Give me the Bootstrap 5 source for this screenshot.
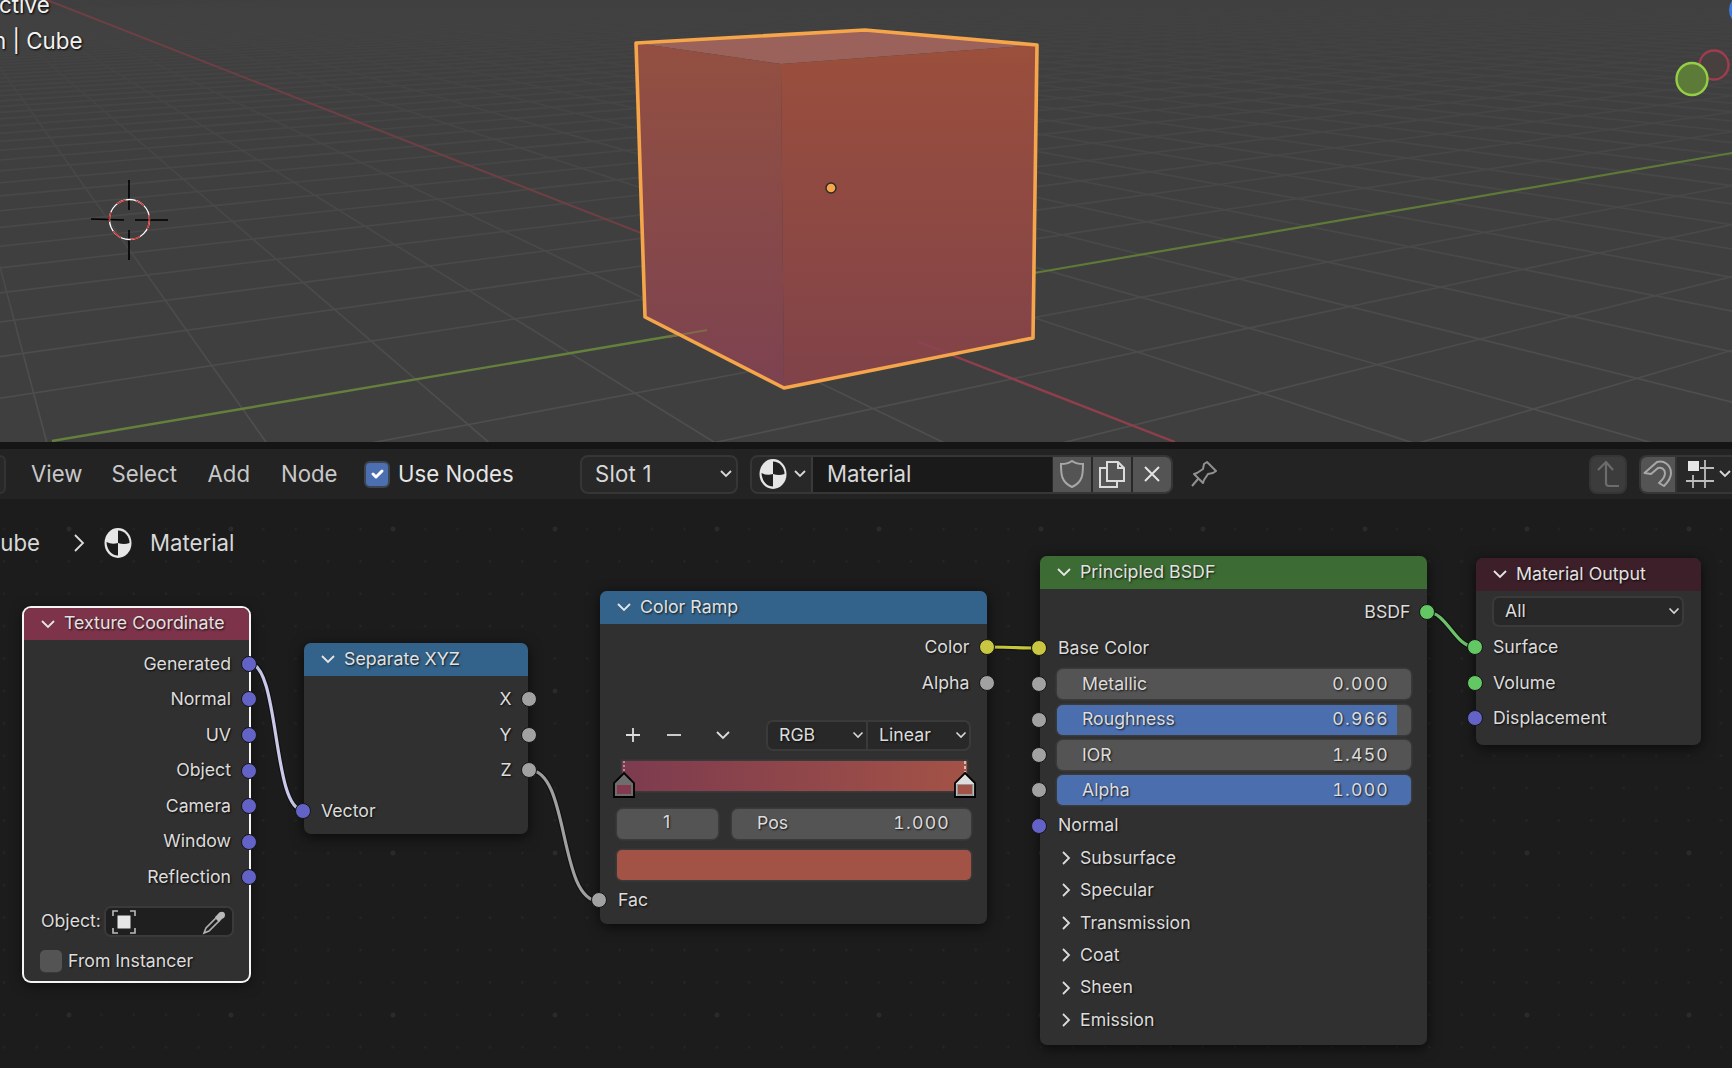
<!doctype html>
<html lang="en"><head><meta charset="utf-8"><title>Blender shader editor</title>
<link href="https://cdn.jsdelivr.net/npm/bootstrap@5.3.0/dist/css/bootstrap.min.css" rel="stylesheet">
<style>
html,body{height:100%;margin:0;background:#1c1c1c;overflow:hidden}
body{font-family:Inter,"Noto Sans",sans-serif;font-size:17.7px;color:#dcdcdc;width:1732px;height:1068px}
.viewport{height:442px;background:#3f3f3f;overflow:hidden}
.viewport svg{display:block}
.ov-text{left:0;top:-13px;color:#f2f2f2;font-size:22.4px;line-height:36px;text-shadow:1px 1px 2px #000;white-space:nowrap}
.ov-text .l1{margin-left:-1px}.ov-text .l2{margin-left:-7px;margin-top:0}
.strip{height:7px;background:#151515}
.hdr{height:50px;background:#232323;font-size:22.2px;color:#c8c8c8}
.stub{width:5.5px;height:39px;border:2px solid #333;border-left:0;border-radius:0 7px 7px 0;background:#282828}
.mi{display:block;white-space:nowrap}
.m-view{margin-left:25.5px;width:80.5px}.m-sel{width:96px}.m-add{width:73.5px}.m-node{width:82.5px}
.hdr .form-check-input{width:26.5px;height:27px;margin:0;background-color:#4b6fb0;border:2px solid #3d4450;border-radius:6px;background-size:20px;--bs-form-check-bg-image:none}
.use{margin-left:8px;width:182px;color:#e6e6e6}
.bbox{height:39px;border:2px solid #363636;border-radius:8px;background:#282828;color:#d8d8d8}
.slot{width:158px;padding:0 3px 0 13px}
.slot span{letter-spacing:.2px}
.matgrp{width:423px;margin-left:12px;overflow:hidden}
.matgrp .ic{width:60px;padding-left:7px;gap:6px;background:#282828}
.matgrp .nm{width:241px;flex:none;background:#1a1a1a;padding-left:14px;border-left:2px solid #3a3a3a;height:100%}
.matgrp .bt{height:100%;background:#545454;margin-left:2px;width:38px;flex:none}
.matgrp .bt.b1{margin-left:1px}
.pin{margin-left:14px;width:34px}
.upb{width:38px;background:#3c3c3c;border-color:#353535;margin-left:auto}
.mag{margin-left:12px;width:93px;overflow:hidden;border-right:0;border-radius:8px 0 0 8px}
.mag .a{width:37px;background:#545454;height:100%}
.mag .b{flex:1;border-left:2px solid #333;height:100%;padding-left:9px}
.canvas{height:569px;background-color:#1c1c1c;background-image:radial-gradient(circle,#2a2a2a 2.2px,transparent 2.8px),radial-gradient(circle,#242424 1px,transparent 1.6px);background-size:162px 162px,32.4px 32.4px;background-position:-12px -51px,-12px 13.8px}
.crumb{left:0;top:27px;height:34px;font-size:22.2px;color:#d8d8d8}
.crumb .u{width:40px;text-align:right}
.crumb .c{margin-left:33px;width:12px}
.crumb .i{margin-left:19px}
.crumb .t{margin-left:18px}
.wires{left:0;top:0}
.node{--bs-card-bg:#303030;--bs-card-border-width:0;--bs-card-border-radius:7px;--bs-card-inner-border-radius:7px;--bs-card-color:#dcdcdc;box-shadow:0 3px 14px rgba(0,0,0,.65);position:absolute;text-shadow:1px 1px 2px rgba(0,0,0,.8)}
.node .card-header{--bs-card-cap-padding-y:0;--bs-card-cap-padding-x:0;--bs-card-border-width:0;height:32.5px;display:flex;align-items:center;padding-left:16px;color:#e2e2e2;gap:8px;font-size:17.8px;border:0}
.node .card-body{padding:6px 0 0}
.h-tex{background:#7d3349}.h-blue{background:#33638a}.h-green{background:#3c6b33}.h-out{background:#3c1f29}
#tc{left:24px;top:108.5px;width:224.5px;height:373px;box-shadow:0 0 0 2px #f4f4f4,0 3px 14px rgba(0,0,0,.65)}
#sx{left:304px;top:144px;width:224px;height:191px}
#cr{left:600px;top:92px;width:387px;height:333px}
#pb{left:1040px;top:57px;width:387px;height:489px}
#mo{left:1476px;top:59px;width:225px;height:187px}
.r{height:35.6px;display:flex;align-items:center;position:relative}
.out{justify-content:flex-end;padding-right:17.5px}
#tc .out{padding-right:17.5px}
#sx .out,#pb .out{padding-right:16.5px}
.in{padding-left:18px}
#sx .in,#mo .in{padding-left:17px}
.s{position:absolute;width:16px;height:16px;border-radius:50%;border:1.5px solid #151515;top:50%;margin-top:-8px}
.out .s{right:-8px}.in .s{left:-9px}
#sx .out .s{right:-9px}
.sv{background:#6363c7}.sg{background:#a1a1a1}.sy{background:#c9c741}.sc{background:#63c763}
.fld{background:#545454;border-radius:6px;box-shadow:0 0 0 1.5px #3a3a3a;height:30px}
.num{font-variant-numeric:tabular-nums;letter-spacing:1.2px}
.dd{background:#282828;border:2px solid #3a3a3a;border-radius:7px;height:31px}
.objrow{margin:11px 14px 0 17px;height:31px;gap:3px}
.objrow .dd{width:130px;padding:0 4px 0 6px;background:#1f1f1f}
.fi{margin:12px 0 0 16px;height:24px;gap:6px}
.cb{width:22px;height:22px;background:#545454;border-radius:5px;box-shadow:0 1px 0 #3a3a3a}
.sx-gap{margin-top:5px}
.ctl{margin:19px 16px 0 17px;height:31px}
.ctl .tools{width:149px}
.ctl .dd{width:205px;padding:0}
.ctl .dd>div{height:100%}
.ctl .rgb{width:100px;padding:0 2px 0 11px;border-right:2px solid #3a3a3a}
.ctl .lin{flex:1;padding:0 2px 0 11px}
.t-plus{margin-left:8px}.t-minus{margin-left:25px}.t-more{margin-left:33px}
.ramp{margin:10px 20px 0 22px;height:30px;background:linear-gradient(90deg,#7c3b4f,#a35246);box-shadow:0 0 0 1.5px #3a3a3a}
.stops{left:-10px;top:11px;width:366px;height:28px;overflow:visible}
.ixr{margin:18px 16px 0 17px;height:30px}
.ix{width:101px;text-align:center;padding-right:2px}
.pos{width:239px;margin-left:14px;padding:0 21px 0 25px}
.swatch{margin:11px 16px 0 17px;height:30px;background:#a35246;border-radius:5px;box-shadow:0 0 0 1.5px #3a3a3a}
.fac{margin-top:3px}
.fld-first{margin-top:3.5px}
.fldrow{height:30.5px;margin-bottom:4.7px;padding-left:17px;padding-right:16px}
.fldrow .progress{--bs-progress-bg:#545454;--bs-progress-bar-bg:#4b6fae;--bs-progress-height:30px;--bs-progress-border-radius:6px;--bs-progress-font-size:17.7px;width:100%;box-shadow:0 0 0 1.5px #3a3a3a}
.fldrow .tx{left:0;right:0;top:0;bottom:0;padding:0 22px 0 25px}
.nrm{margin-top:-2px;margin-bottom:-1.7px}
.pn{height:32.4px;display:flex;align-items:center;padding-left:20px;gap:9px}
.pn svg{margin-left:1px}
.all{margin:5px 17px 0 16px;padding:0 2px 0 11px}
.mo-r{margin-top:3px}
</style></head><body class="d-flex flex-column">

<div class="viewport position-relative">
<svg id="vp" width="1732" height="442" viewBox="0 0 1732 442">
<defs>
<linearGradient id="gl" gradientUnits="userSpaceOnUse" x1="0" y1="0" x2="0" y2="442"><stop offset="0" stop-color="#404040"/><stop offset=".25" stop-color="#454545"/><stop offset="1" stop-color="#4f4f4f"/></linearGradient>
<linearGradient id="fl" x1="0" y1="0" x2="0" y2="1"><stop offset="0" stop-color="#935041"/><stop offset="1" stop-color="#7c4250"/></linearGradient>
<linearGradient id="fr" x1="0" y1="0" x2="0" y2="1"><stop offset="0" stop-color="#9b4f3c"/><stop offset="1" stop-color="#804249"/></linearGradient>
</defs>
<g id="grid" stroke="url(#gl)" stroke-width="1.6"></g>
<line x1="47" y1="0" x2="641" y2="233" stroke="#6e3f44" stroke-width="2"/>
<line x1="918" y1="342" x2="1175" y2="442" stroke="#8f3f4c" stroke-width="2.4"/>
<line x1="52" y1="441" x2="707" y2="330" stroke="#65803c" stroke-width="2.4"/>
<line x1="1034" y1="273" x2="1732" y2="153" stroke="#5f7a38" stroke-width="2.2"/>
<polygon points="636,43 865,30 1037,45 781,64" fill="#9a625a"/>
<polygon points="636,43 781,64 784,388 645,317" fill="url(#fl)"/>
<polygon points="781,64 1037,45 1033,338 784,388" fill="url(#fr)"/>
<line x1="668" y1="337" x2="707" y2="330" stroke="#7e6a48" stroke-width="2"/>
<line x1="918" y1="342" x2="950" y2="354" stroke="#8c4352" stroke-width="2"/>
<polygon points="636,43 865,30 1037,45 1033,338 784,388 645,317" fill="none" stroke="#f5a54a" stroke-width="3.6" stroke-linejoin="round"/>
<circle cx="831" cy="188" r="5" fill="#f5a54a" stroke="#2a2a2a" stroke-width="1.4"/>
<g stroke="#000" stroke-width="1.6"><line x1="129" y1="180" x2="129" y2="210"/><line x1="129" y1="230" x2="129" y2="260"/><line x1="91" y1="219" x2="124" y2="220"/><line x1="135" y1="220" x2="168" y2="220"/></g>
<ellipse cx="129.5" cy="219.5" rx="20" ry="20" fill="none" stroke="#fff" stroke-width="1.3"/>
<ellipse cx="129.5" cy="219.5" rx="20" ry="20" fill="none" stroke="#d03030" stroke-width="1.3" stroke-dasharray="10 10"/>
<circle cx="1714" cy="65" r="14.5" fill="#47403f" stroke="#a03c4e" stroke-width="2.4"/>
<ellipse cx="1692" cy="79" rx="15.5" ry="16" fill="#5c7a38" stroke="#95cf45" stroke-width="2.4"/>
<circle cx="1745" cy="10" r="16" fill="#3d7be0"/>
</svg>
<div class="ov-text position-absolute"><div class="l1">ctive</div><div class="l2">n | Cube</div></div>
</div>
<div class="strip"></div>

<div class="hdr d-flex align-items-center">
 <div class="stub"></div>
 <span class="mi m-view">View</span><span class="mi m-sel">Select</span><span class="mi m-add">Add</span><span class="mi m-node">Node</span>
 <input class="form-check-input" type="checkbox" checked aria-label="Use Nodes">
 <span class="mi use">Use Nodes</span>
 <div class="bbox slot d-flex align-items-center justify-content-between"><span>Slot 1</span><svg width="14" height="10" viewBox="0 0 14 10"><path d="M2 2l5 5 5-5" fill="none" stroke="#d8d8d8" stroke-width="1.8"/></svg></div>
 <div class="bbox matgrp d-flex align-items-center">
  <div class="ic d-flex align-items-center"><svg width="28" height="32" viewBox="0 0 28 32"><ellipse cx="14" cy="16" rx="13.500" ry="15" fill="#e6e6e6"/><path d="M14 16V3.500a11.500 12.500 0 0 1 11.500 12.500q-5.500 2-11.500 0z" fill="#222"/><path d="M14 16q-6 2-11.500-1C3 23 7.500 28.500 14 28.500z" fill="#222"/></svg><svg width="14" height="10" viewBox="0 0 14 10"><path d="M2 2l5 5 5-5" fill="none" stroke="#d8d8d8" stroke-width="1.8"/></svg></div>
  <div class="nm d-flex align-items-center">Material</div>
  <div class="bt b1 d-flex align-items-center justify-content-center"><svg width="26" height="30" viewBox="0 0 26 30"><path d="M13 2c3 2 7 3 11 3 0 10 0 18-11 23C2 23 2 15 2 5c4 0 8-1 11-3z" fill="none" stroke="#a8a8a8" stroke-width="2"/></svg></div>
  <div class="bt d-flex align-items-center justify-content-center"><svg width="30" height="30" viewBox="0 0 30 30"><path d="M10 3h11l6 6v13H10z M21 3v6h6" fill="none" stroke="#dcdcdc" stroke-width="2"/><path d="M10 9H3v19h17v-6" fill="none" stroke="#dcdcdc" stroke-width="2"/></svg></div>
  <div class="bt d-flex align-items-center justify-content-center"><svg width="20" height="20" viewBox="0 0 20 20"><path d="M3 3l14 14M17 3L3 17" stroke="#e4e4e4" stroke-width="2"/></svg></div>
 </div>
 <div class="pin d-flex justify-content-center"><svg width="30" height="30" viewBox="0 0 30 30"><path d="M18 3l9 9-3 2-5 1-4 6-1 3-9-9 3-1 6-4 1-5z M9 20l-6 7" fill="none" stroke="#909090" stroke-width="2" stroke-linejoin="round"/></svg></div>
 <div class="bbox upb d-flex align-items-center justify-content-center"><svg width="26" height="30" viewBox="0 0 26 30"><path d="M3 11l8-8 7 8M11 3v21q0 3 3 3h10" fill="none" stroke="#6c6c6c" stroke-width="2.2"/></svg></div>
 <div class="bbox mag d-flex align-items-center">
  <div class="a d-flex align-items-center justify-content-center"><svg width="30" height="30" viewBox="0 0 30 30"><path d="M1.500 14L14 3c7-2 14 3 14 11 0 5-2 8-7 13l-5-3c4-4 6-6 6-10 0-4-4-6-7-5l-7 6z" fill="none" stroke="#a8a8a8" stroke-width="2" stroke-linejoin="round"/></svg></div>
  <div class="b d-flex align-items-center gap-1"><svg width="28" height="28" viewBox="0 0 28 28"><rect x="2" y="1" width="11" height="10" fill="#e6e6e6"/><path d="M19 0v28M14 8h14M0 21h28M7 15v13" stroke="#bdbdbd" stroke-width="1.800" fill="none"/></svg><svg width="14" height="10" viewBox="0 0 14 10"><path d="M2 2l5 5 5-5" fill="none" stroke="#d8d8d8" stroke-width="1.8"/></svg></div>
 </div>
</div>

<div class="canvas position-relative">
 <div class="crumb position-absolute d-flex align-items-center">
  <span class="u">ube</span>
  <span class="c d-flex"><svg width="12" height="20" viewBox="0 0 12 20"><path d="M2 2l8 8-8 8" fill="none" stroke="#dcdcdc" stroke-width="1.8"/></svg></span>
  <span class="i d-flex"><svg width="28" height="32" viewBox="0 0 28 32"><ellipse cx="14" cy="16" rx="13.500" ry="15" fill="#e6e6e6"/><path d="M14 16V3.500a11.500 12.500 0 0 1 11.500 12.500q-5.500 2-11.500 0z" fill="#1c1c1c"/><path d="M14 16q-6 2-11.500-1C3 23 7.500 28.500 14 28.500z" fill="#1c1c1c"/></svg></span>
  <span class="t">Material</span>
 </div>

 <svg class="wires position-absolute" width="1732" height="569" viewBox="0 499 1732 569" fill="none" stroke-linecap="round">
  <g stroke="#111" stroke-width="5.500"><path d="M249 663C280 663 272 810 303 810"/><path d="M529 770C570 770 558 901 599 901"/><path d="M987 647C1005 647 1020 648 1039 648"/><path d="M1427 612C1447 612 1455 647 1475 647"/></g>
  <path d="M249 663C280 663 272 810 303 810" stroke="#c9c9ea" stroke-width="3.200"/>
  <path d="M529 770C570 770 558 901 599 901" stroke="#a0a0a0" stroke-width="3.200"/>
  <path d="M987 647C1005 647 1020 648 1039 648" stroke="#c7c73c" stroke-width="3.200"/>
  <path d="M1427 612C1447 612 1455 647 1475 647" stroke="#6cc36a" stroke-width="3.200"/>
 </svg>

 <!-- Texture Coordinate -->
 <div class="card node" id="tc">
  <div class="card-header h-tex"><svg width="16" height="10" viewBox="0 0 16 10"><path d="M2 2l6 6 6-6" fill="none" stroke="#e6e6e6" stroke-width="1.800"/></svg><span>Texture Coordinate</span></div>
  <div class="card-body">
   <div class="r out">Generated<i class="s sv"></i></div>
   <div class="r out">Normal<i class="s sv"></i></div>
   <div class="r out">UV<i class="s sv"></i></div>
   <div class="r out">Object<i class="s sv"></i></div>
   <div class="r out">Camera<i class="s sv"></i></div>
   <div class="r out">Window<i class="s sv"></i></div>
   <div class="r out">Reflection<i class="s sv"></i></div>
   <div class="objrow d-flex align-items-center"><span>Object:</span>
    <div class="dd d-flex align-items-center justify-content-between">
     <svg width="24" height="26" viewBox="0 0 24 26"><path d="M6 2H1v5M18 2h5v5M6 24H1v-5M18 24h5v-5" fill="none" stroke="#bbb" stroke-width="1.600"/><rect x="5.500" y="6.500" width="13" height="13" fill="#e6e6e6"/></svg>
     <svg width="26" height="26" viewBox="0 0 26 26"><path d="M2 24l2-5 10-10 3 3L7 22z" fill="none" stroke="#b0b0b0" stroke-width="1.600"/><path d="M13 8l3-3c2-3 7-3 7 1 0 2-1 3-3 4l-3 3-4-5z" fill="#b8b8b8"/></svg>
    </div></div>
   <div class="fi d-flex align-items-center"><span class="cb"></span><span>From Instancer</span></div>
  </div>
 </div>

 <!-- Separate XYZ -->
 <div class="card node" id="sx">
  <div class="card-header h-blue"><svg width="16" height="10" viewBox="0 0 16 10"><path d="M2 2l6 6 6-6" fill="none" stroke="#e6e6e6" stroke-width="1.800"/></svg><span>Separate XYZ</span></div>
  <div class="card-body">
   <div class="r out">X<i class="s sg"></i></div>
   <div class="r out">Y<i class="s sg"></i></div>
   <div class="r out">Z<i class="s sg"></i></div>
   <div class="r in sx-gap"><i class="s sv"></i>Vector</div>
  </div>
 </div>

 <!-- Color Ramp -->
 <div class="card node" id="cr">
  <div class="card-header h-blue"><svg width="16" height="10" viewBox="0 0 16 10"><path d="M2 2l6 6 6-6" fill="none" stroke="#e6e6e6" stroke-width="1.800"/></svg><span>Color Ramp</span></div>
  <div class="card-body">
   <div class="r out">Color<i class="s sy"></i></div>
   <div class="r out">Alpha<i class="s sg"></i></div>
   <div class="ctl d-flex align-items-center">
    <div class="tools d-flex align-items-center">
     <svg width="16" height="16" viewBox="0 0 16 16" class="t-plus"><path d="M8 1v14M1 8h14" stroke="#dcdcdc" stroke-width="1.800"/></svg>
     <svg width="16" height="16" viewBox="0 0 16 16" class="t-minus"><path d="M1 8h14" stroke="#dcdcdc" stroke-width="1.800"/></svg>
     <svg width="16" height="10" viewBox="0 0 16 10" class="t-more"><path d="M2 2l6 6 6-6" fill="none" stroke="#dcdcdc" stroke-width="1.800"/></svg>
    </div>
    <div class="dd d-flex">
     <div class="rgb d-flex align-items-center justify-content-between"><span>RGB</span><svg width="12" height="8" viewBox="0 0 12 8"><path d="M1.500 1.500l4.500 4.500 4.500-4.500" fill="none" stroke="#d8d8d8" stroke-width="1.600"/></svg></div>
     <div class="lin d-flex align-items-center justify-content-between"><span>Linear</span><svg width="12" height="8" viewBox="0 0 12 8"><path d="M1.500 1.500l4.500 4.500 4.500-4.500" fill="none" stroke="#d8d8d8" stroke-width="1.600"/></svg></div>
    </div>
   </div>
   <div class="ramp position-relative">
    <svg class="stops position-absolute" viewBox="0 0 366 28" width="366" height="28">
     <path d="M12 -11V0" stroke="#ddd" stroke-dasharray="2 2" stroke-width="1"/>
     <path d="M353 -11V0" stroke="#fff" stroke-dasharray="3 2" stroke-width="1.200"/>
     <path d="M12 1L22 11V25H2V11z" fill="#6e6e6e" stroke="#000" stroke-width="1.800"/>
     <rect x="5" y="13" width="14" height="9" fill="#85394e"/>
     <path d="M353 1L363 11V25H343V11z" fill="#dedede" stroke="#000" stroke-width="1.800"/>
     <rect x="344.500" y="12" width="17" height="12" fill="#999"/><rect x="346" y="13" width="14" height="9" fill="#a35246"/>
    </svg>
   </div>
   <div class="ixr d-flex">
    <div class="fld ix">1</div>
    <div class="fld pos d-flex align-items-center justify-content-between"><span>Pos</span><span class="num">1.000</span></div>
   </div>
   <div class="swatch"></div>
   <div class="r in fac"><i class="s sg"></i>Fac</div>
  </div>
 </div>

 <!-- Principled BSDF -->
 <div class="card node" id="pb">
  <div class="card-header h-green"><svg width="16" height="10" viewBox="0 0 16 10"><path d="M2 2l6 6 6-6" fill="none" stroke="#e6e6e6" stroke-width="1.800"/></svg><span>Principled BSDF</span></div>
  <div class="card-body">
   <div class="r out">BSDF<i class="s sc"></i></div>
   <div class="r in"><i class="s sy"></i>Base Color</div>
   <div class="r fldrow fld-first in"><i class="s sg"></i><div class="progress position-relative"><div class="progress-bar" style="width:0%"></div><div class="tx position-absolute d-flex align-items-center justify-content-between"><span>Metallic</span><span class="num">0.000</span></div></div></div>
   <div class="r fldrow in"><i class="s sg"></i><div class="progress position-relative"><div class="progress-bar" style="width:96%"></div><div class="tx position-absolute d-flex align-items-center justify-content-between"><span>Roughness</span><span class="num">0.966</span></div></div></div>
   <div class="r fldrow in"><i class="s sg"></i><div class="progress position-relative"><div class="progress-bar" style="width:0%"></div><div class="tx position-absolute d-flex align-items-center justify-content-between"><span>IOR</span><span class="num">1.450</span></div></div></div>
   <div class="r fldrow in"><i class="s sg"></i><div class="progress position-relative"><div class="progress-bar" style="width:100%"></div><div class="tx position-absolute d-flex align-items-center justify-content-between"><span>Alpha</span><span class="num">1.000</span></div></div></div>
   <div class="r in nrm"><i class="s sv"></i>Normal</div>
   <div class="pn"><svg width="10" height="16" viewBox="0 0 10 16"><path d="M2 2l6 6-6 6" fill="none" stroke="#dcdcdc" stroke-width="1.800"/></svg><span>Subsurface</span></div>
   <div class="pn"><svg width="10" height="16" viewBox="0 0 10 16"><path d="M2 2l6 6-6 6" fill="none" stroke="#dcdcdc" stroke-width="1.800"/></svg><span>Specular</span></div>
   <div class="pn"><svg width="10" height="16" viewBox="0 0 10 16"><path d="M2 2l6 6-6 6" fill="none" stroke="#dcdcdc" stroke-width="1.800"/></svg><span>Transmission</span></div>
   <div class="pn"><svg width="10" height="16" viewBox="0 0 10 16"><path d="M2 2l6 6-6 6" fill="none" stroke="#dcdcdc" stroke-width="1.800"/></svg><span>Coat</span></div>
   <div class="pn"><svg width="10" height="16" viewBox="0 0 10 16"><path d="M2 2l6 6-6 6" fill="none" stroke="#dcdcdc" stroke-width="1.800"/></svg><span>Sheen</span></div>
   <div class="pn"><svg width="10" height="16" viewBox="0 0 10 16"><path d="M2 2l6 6-6 6" fill="none" stroke="#dcdcdc" stroke-width="1.800"/></svg><span>Emission</span></div>
  </div>
 </div>

 <!-- Material Output -->
 <div class="card node" id="mo">
  <div class="card-header h-out"><svg width="16" height="10" viewBox="0 0 16 10"><path d="M2 2l6 6 6-6" fill="none" stroke="#e6e6e6" stroke-width="1.800"/></svg><span>Material Output</span></div>
  <div>
   <div class="dd all d-flex align-items-center justify-content-between"><span>All</span><svg width="12" height="8" viewBox="0 0 12 8"><path d="M1.500 1.500l4.500 4.500 4.500-4.500" fill="none" stroke="#d8d8d8" stroke-width="1.600"/></svg></div>
   <div class="r in mo-r"><i class="s sc"></i>Surface</div>
   <div class="r in"><i class="s sc"></i>Volume</div>
   <div class="r in"><i class="s sv"></i>Displacement</div>
  </div>
 </div>
</div>

<script>
(function(){
 var O=[833,308],V1=[-85,-52],V2=[3270,-105],s=.082,t=.0488,g=document.getElementById('grid'),h='';
 function ext(V,P){var k=4;return [V[0],V[1],V[0]+(P[0]-V[0])*k,V[1]+(P[1]-V[1])*k];}
 function add(a){h+='<line x1="'+a[0].toFixed(1)+'" y1="'+a[1].toFixed(1)+'" x2="'+a[2].toFixed(1)+'" y2="'+a[3].toFixed(1)+'"/>';}
 for(var X=-11;X<=60;X++){ if(X===0)continue; var u=X*s,P=[(O[0]+u*V1[0])/(1+u),(O[1]+u*V1[1])/(1+u)]; add(ext(V2,P)); }
 for(var Y=-19;Y<=60;Y++){ if(Y===0)continue; var w=Y*t,Q=[(O[0]+w*V2[0])/(1+w),(O[1]+w*V2[1])/(1+w)]; add(ext(V1,Q)); }
 g.innerHTML=h;
})();
</script>
<script src="https://cdn.jsdelivr.net/npm/bootstrap@5.3.0/dist/js/bootstrap.bundle.min.js"></script>
</body></html>
